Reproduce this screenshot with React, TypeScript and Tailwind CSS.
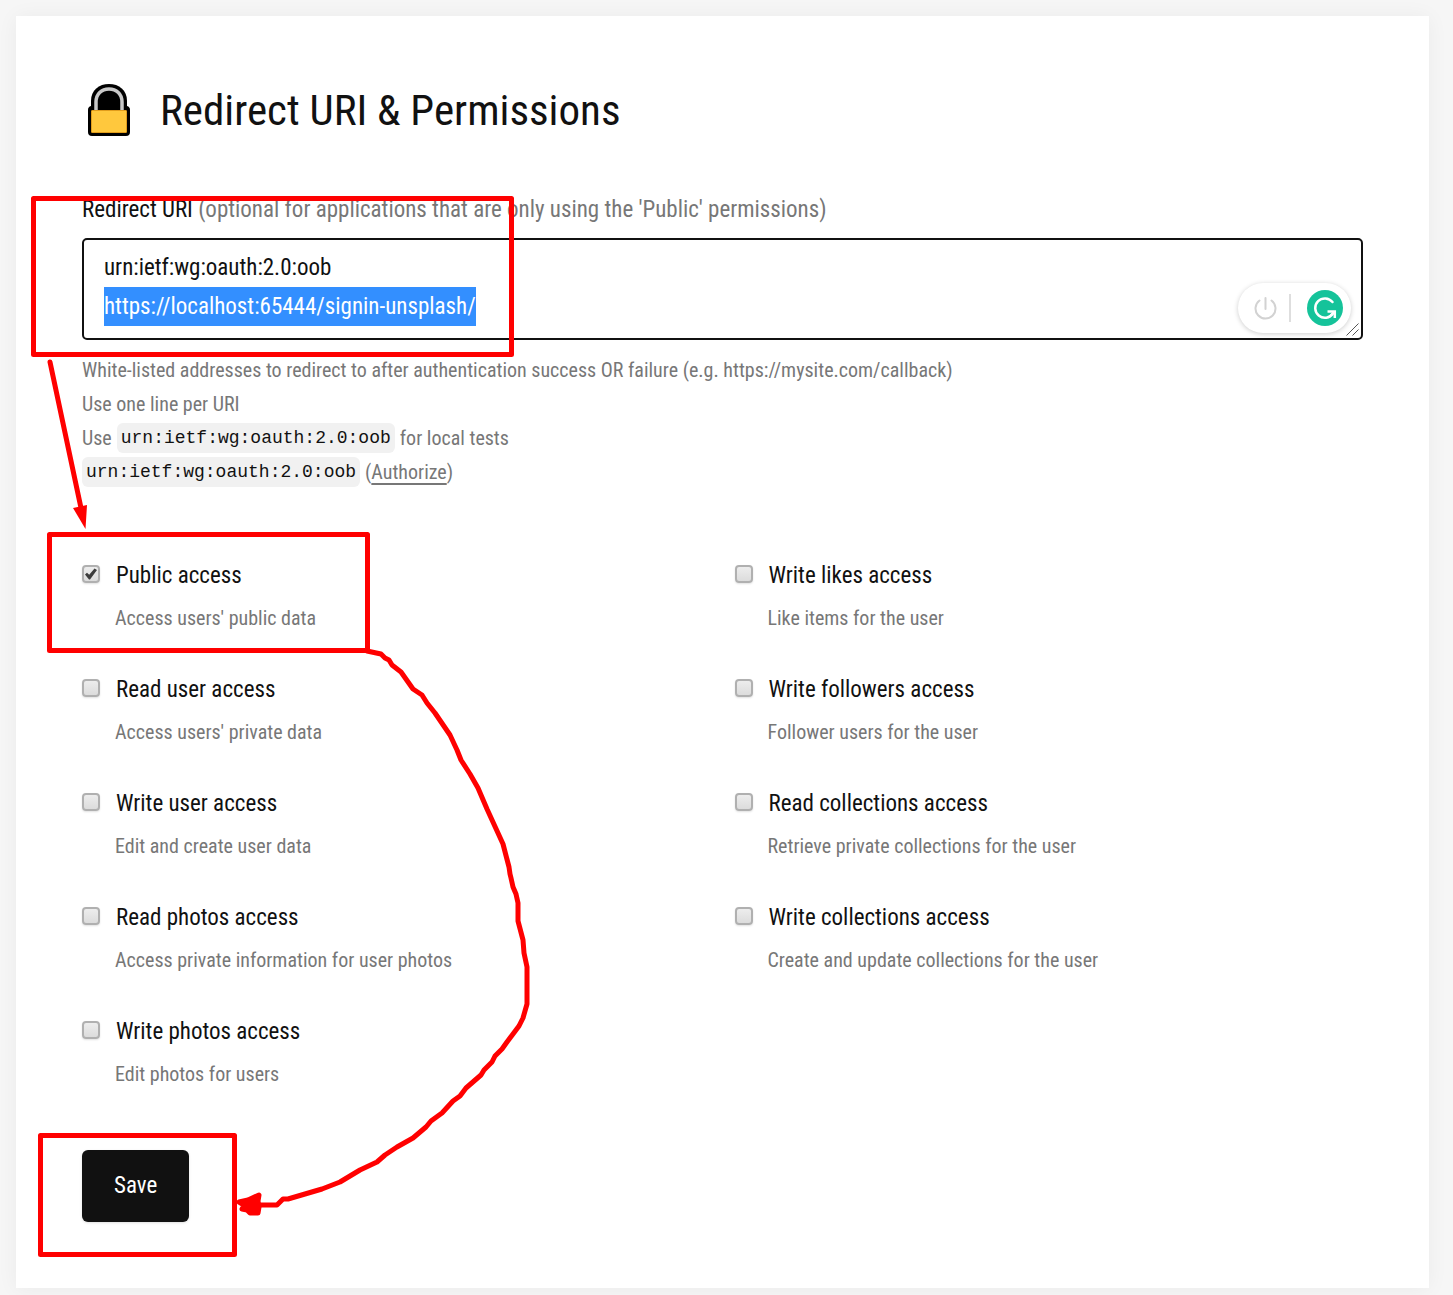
import { useEffect, useRef } from 'react';

type Permission = { id: string; label: string; hint: string; checked?: boolean };

const leftColumn: Permission[] = [
  { id: 'public', label: 'Public access', hint: "Access users' public data", checked: true },
  { id: 'read-user', label: 'Read user access', hint: "Access users' private data" },
  { id: 'write-user', label: 'Write user access', hint: 'Edit and create user data' },
  { id: 'read-photos', label: 'Read photos access', hint: 'Access private information for user photos' },
  { id: 'write-photos', label: 'Write photos access', hint: 'Edit photos for users' },
];

const rightColumn: Permission[] = [
  { id: 'write-likes', label: 'Write likes access', hint: 'Like items for the user' },
  { id: 'write-followers', label: 'Write followers access', hint: 'Follower users for the user' },
  { id: 'read-collections', label: 'Read collections access', hint: 'Retrieve private collections for the user' },
  { id: 'write-collections', label: 'Write collections access', hint: 'Create and update collections for the user' },
];

const uris = 'urn:ietf:wg:oauth:2.0:oob\nhttps://localhost:65444/signin-unsplash/';

function LockIcon() {
  return (
    <svg width="44" height="54" viewBox="0 0 44 54" aria-hidden="true">
      <path d="M4 28V18C4 7 12 1 22 1s18 6 18 17v10z" fill="#000" />
      <path d="M9 28V19C9 11 14.500 6 22 6s13 5 13 13v9" fill="none" stroke="#c8c8c8" strokeWidth="3.500" />
      <path d="M1 27a4 4 0 0 1 3-4h3v4h30v-4h3a4 4 0 0 1 3 4v22a4 4 0 0 1-4 4H5a4 4 0 0 1-4-4z" fill="#000" />
      <rect x="4.500" y="27.500" width="35" height="22" rx="0.500" fill="#ffc83d" stroke="#e19d1c" strokeWidth="1" />
    </svg>
  );
}

function GrammarWidget() {
  return (
    <div className="absolute right-3 bottom-[7px] flex h-[50px] w-[113px] items-center rounded-full bg-white pr-2 pl-4 shadow-[0_1px_5px_rgba(0,0,0,0.2)]">
      <svg width="23" height="23" viewBox="0 0 23 23" fill="none" stroke="#d2d2d2" strokeWidth="2" strokeLinecap="round" aria-hidden="true">
        <path d="M11.500 1v11M5.500 3.500a10 10 0 1 0 12 0" />
      </svg>
      <span className="ml-3 h-7 w-0.5 bg-[#dedede]" />
      <svg className="ml-auto" width="36" height="36" viewBox="0 0 36 36" aria-hidden="true">
        <circle cx="18" cy="18" r="18" fill="#15c39a" />
        <path d="M25.500 12A9.700 9.700 0 1 0 26 23.500" fill="none" stroke="#fff" strokeWidth="2.500" strokeLinecap="round" />
        <path d="M20.500 21.500h7.300V28" fill="none" stroke="#fff" strokeWidth="2.500" />
        <path d="M27.500 21.500l-5 5" stroke="#fff" strokeWidth="2" />
      </svg>
    </div>
  );
}

function ResizeGrip() {
  return (
    <svg className="pointer-events-none absolute right-1 bottom-1" width="13" height="13" viewBox="0 0 13 13" stroke="#555" strokeWidth="1" aria-hidden="true">
      <path d="M0.500 12.500l12-12M6.500 12.500l6-6" />
    </svg>
  );
}

function Code() {
  return (
    <code className="inline-block rounded-md bg-[#f1f1f1] px-1 font-['Liberation_Mono',monospace] text-[18px] leading-[30px] text-[#111]">
      urn:ietf:wg:oauth:2.0:oob
    </code>
  );
}

function PermissionItem({ item }: { item: Permission }) {
  return (
    <div className="h-[114px]">
      <div className="flex h-10 items-center">
        <span className="relative mr-4 flex size-[18px]">
          <input
            id={item.id}
            type="checkbox"
            defaultChecked={item.checked}
            aria-describedby={item.id + '-hint'}
            className="peer size-[18px] appearance-none rounded-sm border-2 border-[#b0b0b0] bg-linear-to-b from-[#ededed] to-[#dcdcdc] shadow-[0_1px_2px_rgba(0,0,0,0.12)]"
          />
          <svg className="pointer-events-none absolute inset-0 hidden peer-checked:block" width="18" height="18" viewBox="0 0 18 18" aria-hidden="true">
            <path d="M3 9.500l2-1.800 2.200 2L12.500 3.500 15 5 8 14.500H7z" fill="#3c3c3c" />
          </svg>
        </span>
        <label htmlFor={item.id} className="pt-1 text-[23px] leading-10 whitespace-nowrap">
          {item.label}
        </label>
      </div>
      <p id={item.id + '-hint'} className="mt-[7px] pl-[33px] text-[20px] leading-[34px] whitespace-nowrap text-[#777]">
        {item.hint}
      </p>
    </div>
  );
}

function Annotations() {
  return (
    <svg className="pointer-events-none absolute top-0 left-0" width="1453" height="1295" viewBox="0 0 1453 1295" fill="none" stroke="#f00" strokeWidth="5" strokeLinejoin="round" strokeLinecap="round" aria-hidden="true">
      <rect x="33.500" y="198.500" width="478" height="156" />
      <rect x="49.500" y="534.500" width="318" height="116" />
      <rect x="40.500" y="1135.500" width="194" height="119" />
      <path d="M50 362L81 508" />
      <path d="M73 508l14-3-1.500 24z" fill="#f00" stroke="none" />
      <path d="M367 651l14 3 4 4 4 2 3 5 9 7 12 17 9 6 5 8 8 10 15 22 7 15 4 10 9 14 8 14 9 21 16 35 6 23 1 7 1 4 2 9 3 7 2 9v18l5 19 1 13 3 14v37l-4 14-4 8-6 8-6 8-5 7-7 7-3 6-8 8-3 5-15 13-6 8-7 5-11 12-11 8-5 6-13 11-16 9-12 8-8 7-17 8-20 12-18 7-34 10h-5l-6 6h-17" />
      <path d="M239 1202l9-2 11-5-1 6 1 6-1 6h-8l-3-3-5-1 2-4z" fill="#f00" />
    </svg>
  );
}

export default function App() {
  const field = useRef<HTMLTextAreaElement>(null);

  useEffect(() => {
    field.current?.focus();
    field.current?.setSelectionRange(uris.indexOf('\n') + 1, uris.length);
  }, []);

  return (
    <div className="relative min-h-screen bg-[#f6f6f6] pt-4 pr-6 pb-[7px] pl-4 font-['Roboto_Condensed','Arial_Narrow','Liberation_Sans',sans-serif] text-[#111]">
      <main className="bg-white px-[66px] pt-16 pb-[66px] shadow-[0_1px_20px_rgba(0,0,0,0.05)]">
        <h1 className="flex h-[60px] items-center gap-[29px] pl-[5px] text-[43px] leading-[60px] whitespace-nowrap">
          <LockIcon />
          Redirect URI &amp; Permissions
        </h1>
        <form onSubmit={(e) => e.preventDefault()}>
          <label htmlFor="redirect" className="mt-[50px] block text-[23px] leading-10 whitespace-nowrap">
            Redirect URI <span className="text-[#777]">(optional for applications that are only using the 'Public' permissions)</span>
          </label>
          <div className="relative mt-2">
            <textarea
              id="redirect"
              ref={field}
              defaultValue={uris}
              spellCheck={false}
              className="block h-[102px] w-full resize-none overflow-hidden rounded-[5px] border-2 border-[#111] bg-white px-5 pt-2 text-[23px] leading-[39px] outline-none selection:bg-[#338fff] selection:text-white"
            />
            <GrammarWidget />
            <ResizeGrip />
          </div>
          <div className="mt-[13px] text-[20px] leading-[34px] whitespace-nowrap text-[#777]">
            <p>White-listed addresses to redirect to after authentication success OR failure (e.g. https://mysite.com/callback)</p>
            <p>Use one line per URI</p>
            <p className="flex h-[34px] items-center gap-[5px]">
              Use <Code /> for local tests
            </p>
            <p className="flex h-[34px] items-center gap-[5px]">
              <Code />
              <span>
                (<a href="#authorize" className="underline underline-offset-4">Authorize</a>)
              </span>
            </p>
          </div>
          <div className="mt-[65px] grid grid-cols-2 gap-x-6">
            <div>{leftColumn.map((item) => <PermissionItem key={item.id} item={item} />)}</div>
            <div>{rightColumn.map((item) => <PermissionItem key={item.id} item={item} />)}</div>
          </div>
          <button type="submit" className="mt-[26px] h-[72px] rounded-md bg-[#111] px-8 text-[23px] text-white shadow-sm">
            Save
          </button>
        </form>
      </main>
      <Annotations />
    </div>
  );
}
